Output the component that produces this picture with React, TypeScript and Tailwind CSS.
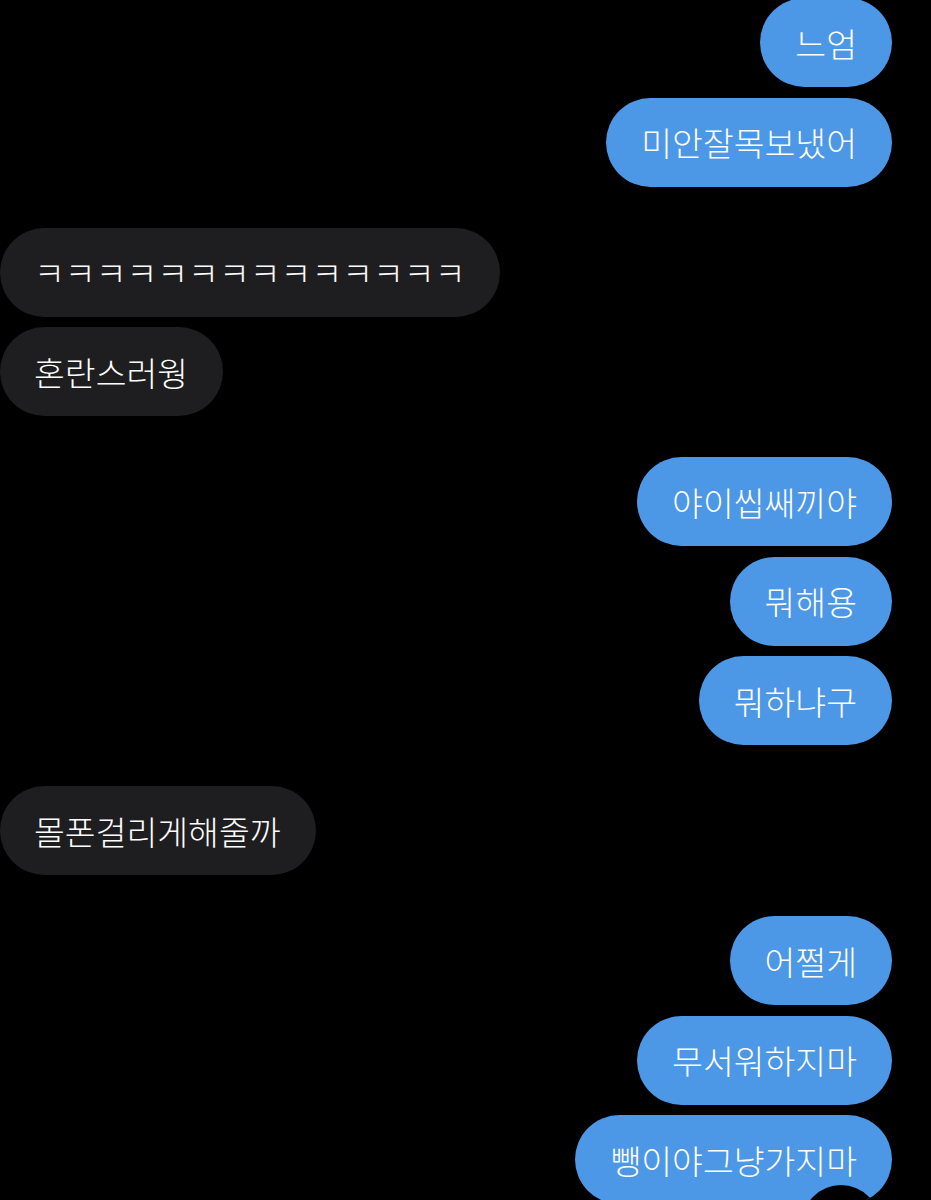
import React from "react";

type Msg = { text: string; me: boolean };

// grouped runs of messages, split where the gap is bigger
const groups: Msg[][] = [
  [
    { text: "느엄", me: true },
    { text: "미안잘목보냈어", me: true },
  ],
  [
    { text: "ㅋㅋㅋㅋㅋㅋㅋㅋㅋㅋㅋㅋㅋㅋ", me: false },
    { text: "혼란스러웡", me: false },
  ],
  [
    { text: "야이씹쌔끼야", me: true },
    { text: "뭐해용", me: true },
    { text: "뭐하냐구", me: true },
  ],
  [{ text: "몰폰걸리게해줄까", me: false }],
  [
    { text: "어쩔게", me: true },
    { text: "무서워하지마", me: true },
    { text: "뺑이야그냥가지마", me: true },
  ],
];

function Bubble({ msg, tail }: { msg: Msg; tail?: boolean }) {
  return (
    <div
      className={`relative flex h-[89px] items-center overflow-hidden rounded-full px-[35px] text-[33.5px] font-light leading-none text-white ${
        msg.me ? "self-end bg-[#4c97e6]" : "self-start bg-[#1e1e20] pl-[34px]"
      }`}
    >
      <span className="whitespace-nowrap">{msg.text}</span>
      {tail && (
        <div className="absolute right-[12px] top-[70px] h-[80px] w-[78px] rounded-full bg-black" />
      )}
    </div>
  );
}

export default function App() {
  return (
    <div
      className="h-[1200px] w-[931px] overflow-hidden bg-black"
      style={{ fontFamily: '"Noto Sans CJK KR", "Noto Sans", sans-serif' }}
    >
      <div className="-mt-[2px] flex flex-col gap-[41px] pr-[39px]">
        {groups.map((g, gi) => (
          <div key={gi} className="flex flex-col gap-[10.5px]">
            {g.map((m, mi) => (
              <Bubble
                key={mi}
                msg={m}
                tail={gi === groups.length - 1 && mi === g.length - 1}
              />
            ))}
          </div>
        ))}
      </div>
    </div>
  );
}
